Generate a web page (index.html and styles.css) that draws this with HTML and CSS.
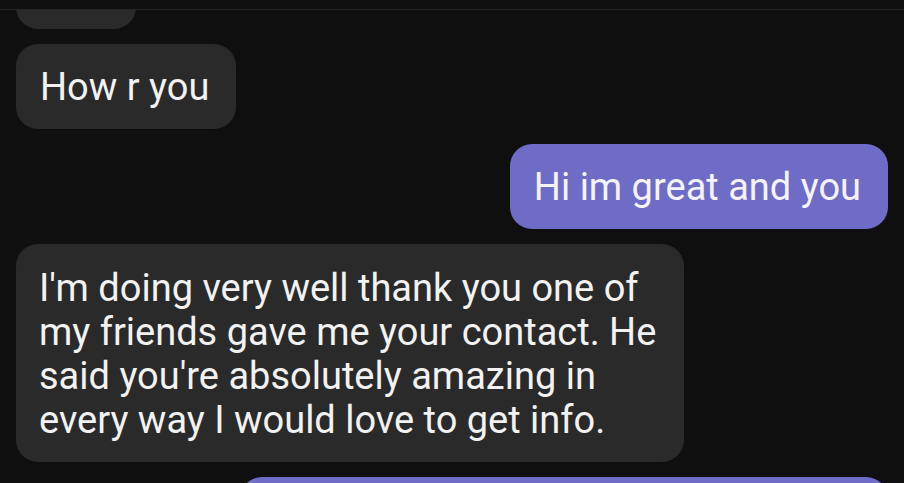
FILE: index.html
```html
<!DOCTYPE html>
<html>
<head>
<meta charset="utf-8">
<link rel="stylesheet" href="styles.css">
</head>
<body>
<div class="screen">
  <div class="topbar"></div>
  <div class="thread">
    <div class="row in"><div class="bubble grey partial">&nbsp;</div></div>
    <div class="row in"><div class="bubble grey">How r you</div></div>
    <div class="row out"><div class="bubble purple">Hi im great and you</div></div>
    <div class="row in"><div class="bubble grey long">I'm doing very well thank you one of<br>my friends gave me your contact. He<br>said you're absolutely amazing in<br>every way I would love to get info.</div></div>
    <div class="row out"><div class="bubble purple wide">&nbsp;</div></div>
  </div>
</div>
</body>
</html>
```
FILE: styles.css
```css
html, body {
  margin: 0;
  padding: 0;
  background: #0f0f0f;
}
.screen {
  width: 904px;
  height: 483px;
  overflow: hidden;
  background: #0f0f0f;
  font-family: Roboto, "Noto Sans", sans-serif;
}
.topbar {
  height: 9px;
  border-bottom: 1px solid #232323;
  background: #101010;
  position: relative;
  z-index: 1;
}
.thread {
  display: flex;
  flex-direction: column;
  gap: 15px;
  padding: 0 16px;
}
.row {
  display: flex;
}
.row.in { justify-content: flex-start; }
.row.out { justify-content: flex-end; }
.bubble {
  font-size: 38px;
  line-height: 44px;
  padding: 21px 27px 20px 24px;
  border-radius: 22px;
  color: #f2f2f2;
  white-space: nowrap;
}
.grey { background: #2a2a2a; }
.purple { background: #6f6cc7; color: #f4f3fb; }
.partial {
  width: 120px;
  box-sizing: border-box;
  margin-top: -66px;
}
.long {
  width: 668px;
  box-sizing: border-box;
  padding: 22px 20px 20px 23px;
}
.wide {
  width: 648px;
  box-sizing: border-box;
}
```
